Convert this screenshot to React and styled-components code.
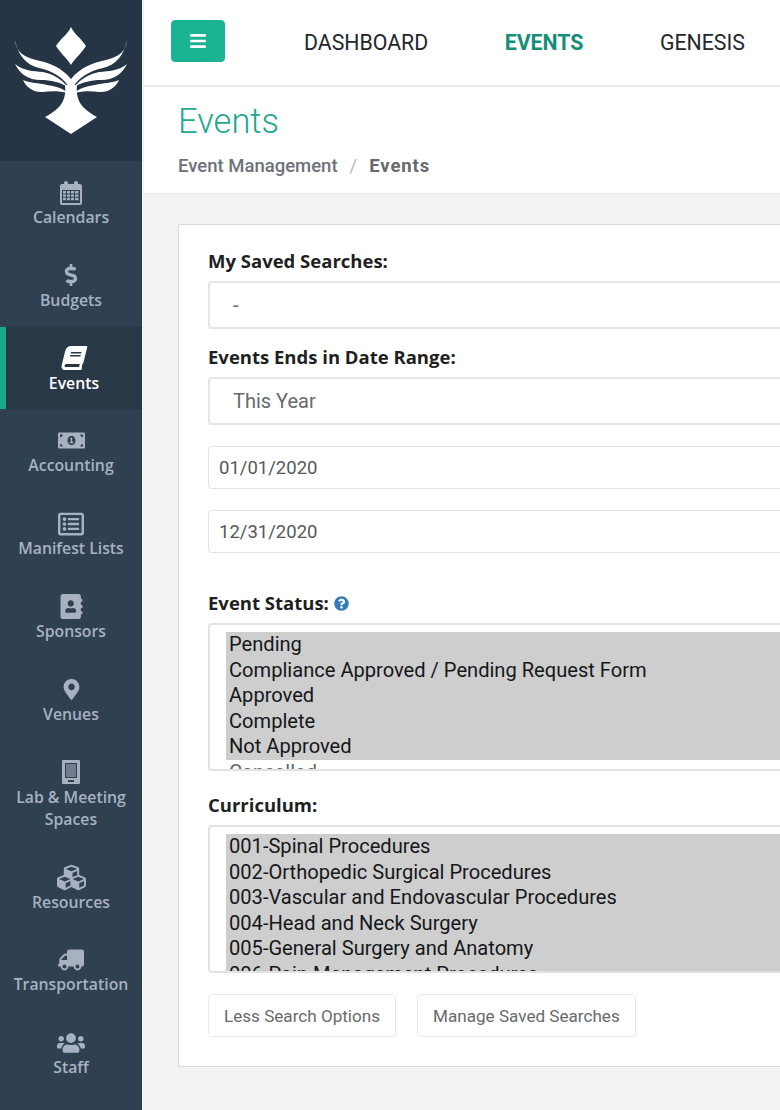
import React from "react";
import styled, { createGlobalStyle } from "styled-components";
import { FaDollarSign, FaBook, FaMoneyBillAlt, FaRegListAlt, FaAddressBook, FaMapMarkerAlt, FaCubes, FaTruck, FaUsers, FaQuestionCircle, FaBars } from "react-icons/fa";

const Global = createGlobalStyle`
  html, body { margin: 0; padding: 0; width: 780px; height: 1110px; overflow: hidden; background: #f3f3f4; }
  * { box-sizing: border-box; }
`;

const Shell = styled.div`
  display: flex;
  width: 780px;
  height: 1110px;
  overflow: hidden;
  font-family: Roboto, "Liberation Sans", sans-serif;
`;
const Sidebar = styled.aside`
  flex: 0 0 142px;
  height: 100%;
  background: #2f4051;
`;
const LogoBox = styled.div`
  height: 161px;
  background: #253545;
  display: flex;
  justify-content: center;
  padding-top: 27px;
`;
const NavItem = styled.div`
  height: ${p => (p.$tall ? 105 : 82.8)}px;
  padding-top: 18px;
  display: flex;
  flex-direction: column;
  align-items: center;
  font-family: "Open Sans", sans-serif;
  font-weight: 600;
  font-size: 15.8px;
  line-height: 22.5px;
  text-align: center;
  color: ${p => (p.$active ? "#ffffff" : "#a7b1c2")};
  background: ${p => (p.$active ? "#293846" : "transparent")};
  border-left: ${p => (p.$active ? "6px solid #19aa8d" : "0")};
`;
const IconSlot = styled.div`
  height: 27px;
  font-size: ${p => p.$size || 24}px;
  display: flex;
  align-items: center;
  justify-content: center;
  & svg { display: block; }
`;
const BookIcon = styled(FaBook)`
  transform: skewX(-14deg);
`;
const FlipTruck = styled(FaTruck)`
  transform: scaleX(-1);
`;
const Main = styled.main`
  flex: 1;
  min-width: 0;
  margin-left: 2px;
  background: #f3f3f4;
`;
const TopBar = styled.header`
  height: 87px;
  background: #fff;
  border-bottom: 2px solid #e7eaec;
  display: flex;
  align-items: flex-start;
  padding: 20px 0 0 27px;
`;
const MenuButton = styled.button`
  width: 54px;
  height: 42px;
  border: 1px solid #1ab394;
  border-radius: 4px;
  background: #1ab394;
  color: #fff;
  font-size: 18px;
  padding: 0;
  display: flex;
  align-items: center;
  justify-content: center;
  margin-right: 79px;
`;
const TopLinks = styled.nav`
  display: flex;
  gap: 76.5px;
  white-space: nowrap;
`;
const TopLink = styled.span`
  font-size: 21.3px;
  line-height: 45px;
  font-weight: ${p => (p.$active ? 700 : 400)};
  color: ${p => (p.$active ? "#148f77" : "#23272b")};
`;
const PageHead = styled.section`
  height: 107px;
  background: #fff;
  border-bottom: 1px solid #e7eaec;
  padding: 14px 0 0 34px;
`;
const Title = styled.h1`
  margin: 0;
  font-size: 34.5px;
  line-height: 40px;
  font-weight: 300;
  color: #1fa88f;
`;
const Crumbs = styled.div`
  margin-top: 13px;
  font-size: 18.5px;
  line-height: 24px;
  font-weight: 500;
  color: #6d7278;
  display: flex;
  & b { font-weight: 700; color: #676a6c; letter-spacing: 0.9px; }
  & i { font-style: normal; font-weight: 400; color: #b5b8ba; margin: 0 12px; }
`;
const Card = styled.section`
  margin: 30px -120px 0 34px;
  height: 843px;
  background: #fff;
  border: 1px solid #d9dada;
  border-radius: 2px;
  padding: 24px 29px;
`;
const Label = styled.label`
  display: flex;
  align-items: center;
  gap: 5px;
  font-family: "Open Sans", sans-serif;
  font-weight: 700;
  font-size: 18.5px;
  line-height: 24px;
  color: #1f1f1f;
  margin-top: ${p => p.$top || 0}px;
`;
const HelpIcon = styled(FaQuestionCircle)`
  color: #337ab7;
  font-size: 15px;
`;
const SelectBox = styled.div`
  height: 48px;
  margin-top: 8px;
  border: 2px solid #e6e6e6;
  border-radius: 4px;
  padding-left: 23px;
  display: flex;
  align-items: center;
  font-size: 20px;
  color: #676a6c;
  background: #fff;
`;
const DateInput = styled.input`
  display: block;
  width: 100%;
  height: 43px;
  margin-top: ${p => p.$top}px;
  border: 1px solid #e2e2e2;
  border-radius: 4px;
  padding: 0 10px;
  font-family: Roboto, sans-serif;
  font-size: 18.5px;
  color: #55585a;
  background: #fff;
  outline: none;
`;
const ListBox = styled.div`
  height: 148px;
  margin-top: ${p => p.$top}px;
  border: 2px solid #e2e2e2;
  border-radius: 4px;
  padding: 7px 0 0 16px;
  overflow: hidden;
  background: #fff;
`;
const Option = styled.div`
  height: 25.6px;
  padding-left: 3px;
  font-family: Roboto, sans-serif;
  font-size: 20.1px;
  line-height: 25.6px;
  white-space: nowrap;
  color: ${p => (p.$selected ? "#15171a" : "#60666b")};
  background: ${p => (p.$selected ? "#cecece" : "transparent")};
`;
const ButtonRow = styled.div`
  display: flex;
  gap: 21px;
  margin-top: 21px;
`;
const GhostButton = styled.button`
  height: 43px;
  padding: 0 15px;
  background: #fff;
  border: 1px solid #e7eaec;
  border-radius: 4px;
  font-family: Roboto, sans-serif;
  font-size: 17.1px;
  color: #676a6c;
`;

const WingPaths = () => (
  <>
    <path d="M0 13C1 25 9 30 21 33C35 36 46 40 56 52L56 64C50 51 38 44 24 41C11 38 3 28 0 13Z" />
    <path d="M0 37C8 44 18 44 28 45C38 47 46 52 53 60C44 55 36 53 26 53C13 53 5 47 0 37Z" />
    <path d="M8 53C14 56 24 56 32 58C40 59 47 61 53 66C44 64 36 64 28 65C19 66 11 60 8 53Z" />
  </>
);
const Logo = () => (
  <svg width="112" height="108" viewBox="0 0 112 108" fill="#fff">
    <path d="M56 0C59 7 66 11 71 19C66 27 60 31 56 38C52 31 46 27 41 19C46 11 53 7 56 0Z" />
    <WingPaths />
    <g transform="translate(112 0) scale(-1 1)"><WingPaths /></g>
    <path d="M50 58C51 68 49 74 44 80C40 84 34 88 30 90L56 107L82 90C78 88 72 84 68 80C63 74 61 68 62 58Z" />
  </svg>
);

const CalendarIcon = () => (
  <svg width="22" height="24" viewBox="0 0 22 24" fill="currentColor">
    <path fillRule="evenodd" d="M2 3h2V2a2 2 0 0 1 4 0v1h6V2a2 2 0 0 1 4 0v1h2a2 2 0 0 1 2 2v17a2 2 0 0 1-2 2H2a2 2 0 0 1-2-2V5a2 2 0 0 1 2-2Zm0 6v13h18V9H2Z" />
    <path d="M3 10h3v2.4H3zm4 0h3v2.4H7zm4 0h3v2.4h-3zm4 0h3.5v2.4H15zM3 13.4h3v2.4H3zm4 0h3v2.4H7zm4 0h3v2.4h-3zm4 0h3.5v2.4H15zM3 16.8h3v2.4H3zm4 0h3v2.4H7zm4 0h3v2.4h-3zm4 0h3.5v2.4H15z" />
  </svg>
);
const LabIcon = () => (
  <svg width="18" height="24" viewBox="0 0 18 24">
    <path fill="currentColor" fillRule="evenodd" d="M1 0h16a1 1 0 0 1 1 1v22a1 1 0 0 1-1 1H1a1 1 0 0 1-1-1V1a1 1 0 0 1 1-1Zm2 3v15h12V3H3Zm3 17v2h6v-2H6Z" />
    <path fill="currentColor" opacity=".55" d="M4 4h10v13H4z" />
  </svg>
);

const nav = [
  { label: "Calendars", icon: <CalendarIcon /> },
  { label: "Budgets", icon: <FaDollarSign />, size: 22 },
  { label: "Events", icon: <BookIcon />, active: true },
  { label: "Accounting", icon: <FaMoneyBillAlt />, size: 27 },
  { label: "Manifest Lists", icon: <FaRegListAlt />, size: 26 },
  { label: "Sponsors", icon: <FaAddressBook />, size: 25 },
  { label: "Venues", icon: <FaMapMarkerAlt />, size: 21 },
  { label: "Lab & Meeting Spaces", icon: <LabIcon />, tall: true },
  { label: "Resources", icon: <FaCubes />, size: 29 },
  { label: "Transportation", icon: <FlipTruck />, size: 26 },
  { label: "Staff", icon: <FaUsers />, size: 28 },
];

const statuses = ["Pending", "Compliance Approved / Pending Request Form", "Approved", "Complete", "Not Approved"];
const curricula = ["001-Spinal Procedures", "002-Orthopedic Surgical Procedures", "003-Vascular and Endovascular Procedures", "004-Head and Neck Surgery", "005-General Surgery and Anatomy"];

export default function App() {
  return (
    <Shell>
      <Global />
      <Sidebar>
        <LogoBox><Logo /></LogoBox>
        {nav.map(n => (
          <NavItem key={n.label} $active={n.active} $tall={n.tall}>
            <IconSlot $size={n.size}>{n.icon}</IconSlot>
            {n.label}
          </NavItem>
        ))}
      </Sidebar>
      <Main>
        <TopBar>
          <MenuButton aria-label="Menu"><FaBars /></MenuButton>
          <TopLinks>
            <TopLink>DASHBOARD</TopLink>
            <TopLink $active>EVENTS</TopLink>
            <TopLink>GENESIS</TopLink>
          </TopLinks>
        </TopBar>
        <PageHead>
          <Title>Events</Title>
          <Crumbs>Event Management<i>/</i><b>Events</b></Crumbs>
        </PageHead>
        <Card>
          <Label>My Saved Searches:</Label>
          <SelectBox>-</SelectBox>
          <Label $top={16}>Events Ends in Date Range:</Label>
          <SelectBox>This Year</SelectBox>
          <DateInput $top={21} readOnly value="01/01/2020" />
          <DateInput $top={21} readOnly value="12/31/2020" />
          <Label $top={38}>Event Status: <HelpIcon /></Label>
          <ListBox $top={8}>
            {statuses.map(s => <Option key={s} $selected>{s}</Option>)}
            <Option>Cancelled</Option>
          </ListBox>
          <Label $top={22}>Curriculum:</Label>
          <ListBox $top={8}>
            {curricula.map(s => <Option key={s} $selected>{s}</Option>)}
            <Option $selected>006-Pain Management Procedures</Option>
          </ListBox>
          <ButtonRow>
            <GhostButton>Less Search Options</GhostButton>
            <GhostButton>Manage Saved Searches</GhostButton>
          </ButtonRow>
        </Card>
      </Main>
    </Shell>
  );
}
